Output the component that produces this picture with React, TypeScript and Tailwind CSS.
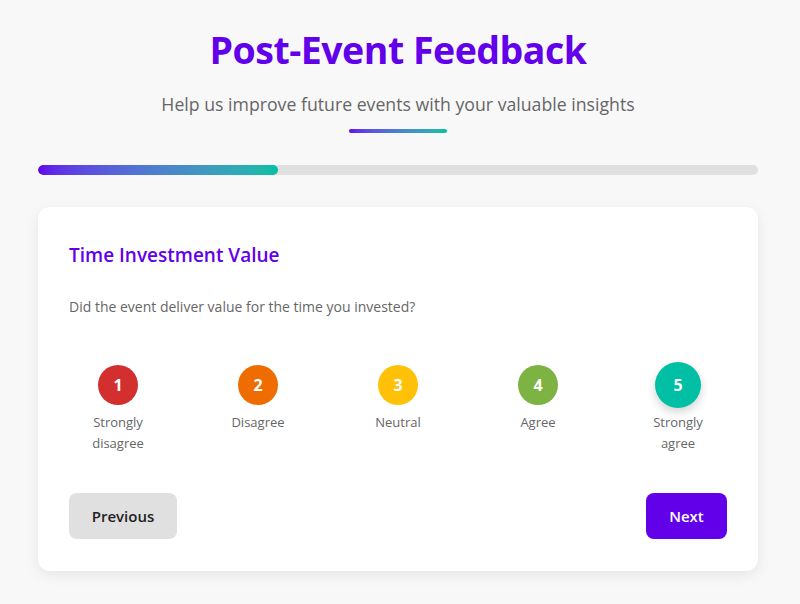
import React, { useState } from "react";

interface RatingOption {
  value: number;
  label: string;
  color: string;
}

const options: RatingOption[] = [
  { value: 1, label: "Strongly disagree", color: "bg-[#d32f2f]" },
  { value: 2, label: "Disagree", color: "bg-[#ef6c00]" },
  { value: 3, label: "Neutral", color: "bg-[#ffc107]" },
  { value: 4, label: "Agree", color: "bg-[#7cb342]" },
  { value: 5, label: "Strongly agree", color: "bg-[#00bfa5]" },
];

const App: React.FC = () => {
  const [selected, setSelected] = useState<number>(5);

  return (
    <div
      className="min-h-[604px] bg-[#f8f8f9] pt-[26px]"
      style={{ fontFamily: '"Open Sans", "Noto Sans", sans-serif' }}
    >
      <div className="w-[720px] ml-[38px]">
        <div className="flex flex-col items-center">
          <h1 className="text-[37.5px] leading-[48px] font-bold text-[#6200ea] tracking-[-0.5px]">
            Post-Event Feedback
          </h1>
          <p className="mt-[17px] text-[17.7px] leading-[26px] text-[#666666]">
            Help us improve future events with your valuable insights
          </p>
          <div className="mt-[12px] h-[4px] w-[98px] rounded-full bg-gradient-to-r from-[#6200ea] to-[#00bfa5]" />
        </div>

        <div className="mt-[32px] h-[10px] w-full rounded-full bg-[#e0e0e0] overflow-hidden">
          <div className="h-full w-1/3 rounded-full bg-gradient-to-r from-[#6200ea] to-[#00bfa5]" />
        </div>

        <div className="mt-[32px] rounded-xl bg-white px-[31px] pt-[33px] pb-[32px] shadow-[0_4px_14px_rgba(0,0,0,0.08)]">
          <h2 className="text-[19px] leading-[30px] font-semibold text-[#6200ea]">
            Time Investment Value
          </h2>
          <p className="mt-[25px] text-[14px] leading-[24px] text-[#666666]">
            Did the event deliver value for the time you invested?
          </p>

          <div className="mt-[46px] flex justify-between px-px">
            {options.map((opt) => {
              const active = opt.value === selected;
              return (
                <button
                  key={opt.value}
                  onClick={() => setSelected(opt.value)}
                  className="w-24 flex flex-col items-center"
                >
                  <div className="h-[40px] flex items-center justify-center">
                    <span
                      className={`flex items-center justify-center rounded-full text-white font-bold text-[16px] ${opt.color} ${
                        active
                          ? "h-[46px] w-[46px] shadow-[0_4px_10px_rgba(0,0,0,0.18)]"
                          : "h-[40px] w-[40px]"
                      }`}
                    >
                      {opt.value}
                    </span>
                  </div>
                  <span className="mt-[7px] text-[13px] leading-[21px] text-[#666666] text-center w-[70px]">
                    {opt.label}
                  </span>
                </button>
              );
            })}
          </div>

          <div className="mt-[39px] flex justify-between">
            <button className="h-[46px] w-[108px] rounded-lg bg-[#e0e0e0] text-[15px] font-semibold text-[#222222]">
              Previous
            </button>
            <button className="h-[46px] w-[81px] rounded-lg bg-[#6200ea] text-[15px] font-semibold text-white">
              Next
            </button>
          </div>
        </div>
      </div>
    </div>
  );
};

export default App;
